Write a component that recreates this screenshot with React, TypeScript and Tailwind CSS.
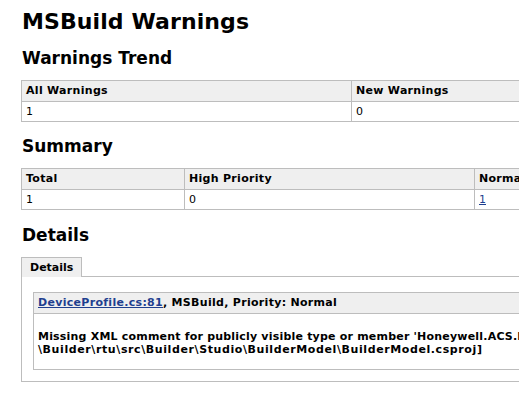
import React from 'react';

// MSBuild warnings report page (Jenkins-style plugin view)

const font = { fontFamily: '"DejaVu Sans", Verdana, sans-serif' };

const th = 'border border-[#bdbdbd] bg-[#efefef] px-[4px] py-[3px] text-left font-bold leading-[14px] tracking-[0.3px]';
const td = 'border border-[#bdbdbd] px-[4px] py-[3px] text-left font-normal leading-[13px]';

export default function App() {
  return (
    <div className="w-[519px] h-[402px] overflow-hidden bg-white text-black" style={font}>
      <div className="w-[680px] pl-[21px] pt-[9px]">
        <h1 className="text-[22px] font-bold leading-[26px] pl-[1px] tracking-[0.1px]">MSBuild Warnings</h1>

        {/* Trend */}
        <h2 className="mt-[13px] mb-[12px] text-[17px] font-bold leading-[20px] pl-[1px]">Warnings Trend</h2>
        <table className="w-[660px] border-collapse text-[11px]">
          <thead>
            <tr>
              <th className={`${th} w-[330px]`}>All Warnings</th>
              <th className={th}>New Warnings</th>
            </tr>
          </thead>
          <tbody>
            <tr>
              <td className={td}>1</td>
              <td className={td}>0</td>
            </tr>
          </tbody>
        </table>

        {/* Summary */}
        <h2 className="mt-[14px] mb-[12px] text-[17px] font-bold leading-[20px] pl-[1px]">Summary</h2>
        <table className="w-[660px] border-collapse text-[11px]">
          <thead>
            <tr>
              <th className={`${th} w-[163px]`}>Total</th>
              <th className={`${th} w-[290px]`}>High Priority</th>
              <th className={th}>Normal Priority</th>
            </tr>
          </thead>
          <tbody>
            <tr>
              <td className={td}>1</td>
              <td className={td}>0</td>
              <td className={td}>
                <a href="#" className="text-[#1f3f8f] underline">1</a>
              </td>
            </tr>
          </tbody>
        </table>

        {/* Details */}
        <h2 className="mt-[15px] mb-[12px] text-[17px] font-bold leading-[20px] pl-[1px]">Details</h2>
        <div className="flex">
          <div className="relative z-10 -mb-px border border-b-0 border-[#bdbdbd] bg-[#efefef] px-[8px] pt-[3px] pb-[3px] text-[11px] font-bold leading-[13px]">
            Details
          </div>
        </div>
        <div className="border border-[#bdbdbd] pl-[11px] pt-[15px] pb-[11px]">
          <div className="border border-[#bdbdbd] text-[11px] font-bold">
            <div className="border-b border-[#bdbdbd] bg-[#efefef] px-[4px] py-[4px] leading-[12px] tracking-[0.3px]">
              <a href="#" className="text-[#1f3f8f] underline">DeviceProfile.cs:81</a>, MSBuild, Priority: Normal
            </div>
            <div className="whitespace-nowrap px-[4px] pt-[16px] pb-[13px] leading-[13px]">
              <span className="tracking-[0.2px]">
                Missing XML comment for publicly visible type or member 'Honeywell.ACS.Builder.Studio.BuilderModel.DeviceProfile.Id' [D:\Projects
              </span>
              <br />
              <span className="tracking-[0.6px]">\Builder\rtu\src\Builder\Studio\BuilderModel\BuilderModel.csproj]</span>
            </div>
          </div>
        </div>
      </div>
    </div>
  );
}
